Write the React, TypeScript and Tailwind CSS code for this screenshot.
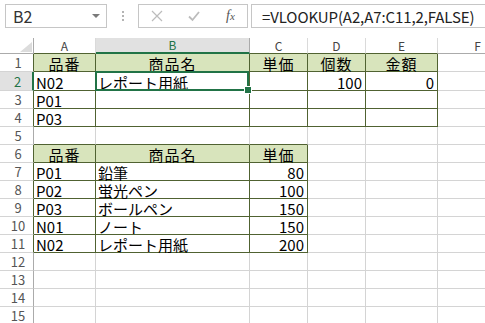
const cols = ["A", "B", "C", "D", "E", "F"];
const rowHeights = [18, 19, 18, 18, 18, 18, 18, 18, 18, 18, 18, 18, 18, 18, 18];

type Cell = { t: string; right?: boolean; center?: boolean };

const data: Record<string, Cell> = {
  "1-0": { t: "品番", center: true },
  "1-1": { t: "商品名", center: true },
  "1-2": { t: "単価", center: true },
  "1-3": { t: "個数", center: true },
  "1-4": { t: "金額", center: true },
  "2-0": { t: "N02" },
  "2-1": { t: "レポート用紙" },
  "2-3": { t: "100", right: true },
  "2-4": { t: "0", right: true },
  "3-0": { t: "P01" },
  "4-0": { t: "P03" },
  "6-0": { t: "品番", center: true },
  "6-1": { t: "商品名", center: true },
  "6-2": { t: "単価", center: true },
  "7-0": { t: "P01" },
  "7-1": { t: "鉛筆" },
  "7-2": { t: "80", right: true },
  "8-0": { t: "P02" },
  "8-1": { t: "蛍光ペン" },
  "8-2": { t: "100", right: true },
  "9-0": { t: "P03" },
  "9-1": { t: "ボールペン" },
  "9-2": { t: "150", right: true },
  "10-0": { t: "N01" },
  "10-1": { t: "ノート" },
  "10-2": { t: "150", right: true },
  "11-0": { t: "N02" },
  "11-1": { t: "レポート用紙" },
  "11-2": { t: "200", right: true },
};

// the two bordered ranges: A1:E4 and A6:C11
function inTable(r: number, c: number) {
  if (r >= 1 && r <= 4 && c >= 0 && c <= 4) return true;
  if (r >= 6 && r <= 11 && c >= 0 && c <= 2) return true;
  return false;
}

function isHead(r: number, c: number) {
  return (r === 1 && c <= 4) || (r === 6 && c <= 2);
}

function FormulaBar() {
  return (
    <div className="h-[38px] flex items-start pt-[4px] pl-[5px]">
      <div className="w-[102px] h-[24px] border border-[#c6c6c6] flex items-center justify-between pl-[7px] pr-[6px]">
        <span className="text-[16px] text-[#333] leading-none">B2</span>
        <svg width="8" height="5" viewBox="0 0 8 5">
          <polygon points="0,0 8,0 4,4" fill="#7a7a7a" />
        </svg>
      </div>
      <div className="w-[31px] h-[24px] flex flex-col items-center justify-center gap-[2px]">
        <div className="w-[2px] h-[2px] bg-[#b4b4b4]" />
        <div className="w-[2px] h-[2px] bg-[#b4b4b4]" />
        <div className="w-[2px] h-[2px] bg-[#b4b4b4]" />
      </div>
      <div className="w-[110px] h-[24px] border border-[#c6c6c6] flex items-center">
        <svg width="12" height="12" viewBox="0 0 12 12" className="ml-[12px]">
          <path d="M1 1 L11 11 M11 1 L1 11" stroke="#bcbcbc" strokeWidth="1.2" />
        </svg>
        <svg width="12" height="12" viewBox="0 0 12 12" className="ml-[25px]">
          <path d="M1 6.5 L4.5 10 L11 2" stroke="#bcbcbc" strokeWidth="1.8" fill="none" />
        </svg>
        <span className="ml-[26px] text-[14px] italic text-[#555] leading-none" style={{ fontFamily: "'Liberation Serif', serif" }}>
          f<span className="text-[11px]">x</span>
        </span>
      </div>
      <div className="ml-[3px] flex-1 h-[24px] border border-r-0 border-[#c6c6c6] flex items-center pl-[10px]">
        <span className="text-[15px] text-[#222] leading-none tracking-[-0.1px]">=VLOOKUP(A2,A7:C11,2,FALSE)</span>
      </div>
    </div>
  );
}

function App() {
  return (
    <div
      className="w-[485px] h-[323px] bg-white overflow-hidden"
      style={{ fontFamily: "'Noto Sans CJK JP', 'Liberation Sans', sans-serif" }}
    >
      <FormulaBar />
      <div className="grid grid-cols-[34px_62px_154px_58px_58px_72px_80px]">
        {/* corner + column headers */}
        <div className="h-[16px] border-r border-b border-r-[#ababab] border-b-[#ababab] flex items-end justify-end pr-[1px] pb-[1px]">
          <svg width="12" height="10" viewBox="0 0 12 10">
            <polygon points="12,0 12,10 0,10" fill="#dcdcdc" />
          </svg>
        </div>
        {cols.map((c, i) =>
          c === "B" ? (
            <div
              key={c}
              className="h-[16px] bg-[#e1e1e1] border-r border-r-[#ababab] border-b-2 border-b-[#217346] flex items-center justify-center text-[12px] text-[#217346] leading-none"
            >
              {c}
            </div>
          ) : (
            <div
              key={c}
              className={
                "h-[16px] border-r border-b border-r-[#dadada] flex items-center justify-center text-[12px] text-[#444] leading-none " +
                (inTable(1, i) ? "border-b-[#506231]" : "border-b-[#ababab]")
              }
            >
              {c}
            </div>
          )
        )}
        {rowHeights.map((h, ri) => {
          const r = ri + 1;
          return [
            r === 2 ? (
              <div
                key={"h" + r}
                style={{ height: h }}
                className="bg-[#e1e1e1] border-r-2 border-r-[#217346] border-b border-b-[#d4d4d4] flex items-center justify-center pl-[3px] text-[13px] text-[#217346] leading-none"
              >
                {r}
              </div>
            ) : (
              <div
                key={"h" + r}
                style={{ height: h }}
                className={
                  "border-r border-b border-b-[#d4d4d4] flex items-center justify-center pl-[3px] text-[13px] text-[#555] leading-none overflow-hidden " +
                  (inTable(r, 0) ? "border-r-[#506231]" : "border-r-[#ababab]")
                }
              >
                {r}
              </div>
            ),
            ...cols.map((_, c) => {
              const cell = data[r + "-" + c];
              const darkR = inTable(r, c) || inTable(r, c + 1);
              const darkB = inTable(r, c) || inTable(r + 1, c);
              const sel = r === 2 && c === 1;
              return (
                <div
                  key={r + "-" + c}
                  style={{ height: h }}
                  className={
                    "relative border-r border-b flex items-center text-[15px] text-black leading-[15px] pt-[2px] whitespace-nowrap " +
                    (darkR ? "border-r-[#506231] " : "border-r-[#d4d4d4] ") +
                    (darkB ? "border-b-[#506231] " : "border-b-[#d4d4d4] ") +
                    (isHead(r, c) ? "bg-[#d8e4bc] " : "") +
                    (cell && cell.center ? "justify-center tracking-[1px] " : cell && cell.right ? "justify-end pr-[3px] " : "pl-[2px] ")
                  }
                >
                  {cell && <span className="block h-[15px]">{cell.t}</span>}
                  {sel && (
                    <div className="absolute -left-px -top-px right-0 -bottom-px border-2 border-[#217346] z-10">
                      <div className="absolute -right-[4px] -bottom-[4px] w-[6px] h-[6px] bg-[#217346] outline outline-1 outline-white" />
                    </div>
                  )}
                </div>
              );
            }),
          ];
        })}
      </div>
    </div>
  );
}

export default App;
